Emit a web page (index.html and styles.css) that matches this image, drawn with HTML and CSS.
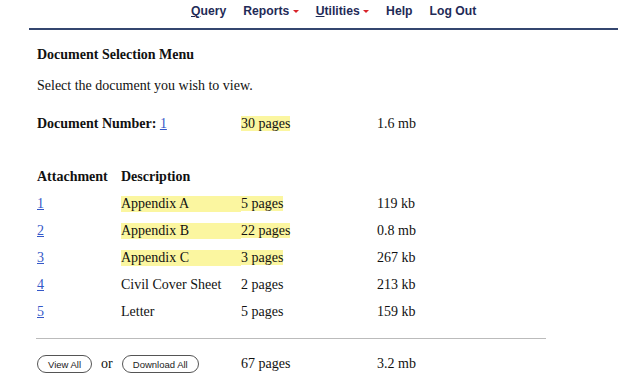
FILE: index.html
```html
<!DOCTYPE html>
<html lang="en">
<head>
    <meta charset="UTF-8">
    <meta name="viewport" content="width=device-width, initial-scale=1.0">
    <title>Document Selection Menu</title>
    <link rel="stylesheet" href="styles.css">
</head>
<body>
    <div class="topbar">
        <nav class="menu">
            <a href="#"><u>Q</u>uery</a>
            <a href="#">Reports <span class="caret"></span></a>
            <a href="#"><u>U</u>tilities <span class="caret"></span></a>
            <a href="#">Help</a>
            <a href="#">Log Out</a>
        </nav>
    </div>

    <div class="content">
        <h2>Document Selection Menu</h2>
        <p class="intro">Select the document you wish to view.</p>

        <div class="grid docnum">
            <div class="wide"><b>Document Number:</b> <a href="#">1</a></div>
            <div><span class="hl">30 pages</span></div>
            <div>1.6 mb</div>
        </div>

        <div class="grid head">
            <div>Attachment</div>
            <div>Description</div>
        </div>

        <div class="grid row">
            <div><a href="#">1</a></div>
            <div class="hl">Appendix A</div>
            <div><span class="hl">5 pages</span></div>
            <div>119 kb</div>
        </div>
        <div class="grid row">
            <div><a href="#">2</a></div>
            <div class="hl">Appendix B</div>
            <div><span class="hl">22 pages</span></div>
            <div>0.8 mb</div>
        </div>
        <div class="grid row">
            <div><a href="#">3</a></div>
            <div class="hl">Appendix C</div>
            <div><span class="hl">3 pages</span></div>
            <div>267 kb</div>
        </div>
        <div class="grid row">
            <div><a href="#">4</a></div>
            <div>Civil Cover Sheet</div>
            <div>2 pages</div>
            <div>213 kb</div>
        </div>
        <div class="grid row">
            <div><a href="#">5</a></div>
            <div>Letter</div>
            <div>5 pages</div>
            <div>159 kb</div>
        </div>

        <hr class="sep">

        <div class="grid totals">
            <div class="wide buttons">
                <button>View All</button>
                <span class="or">or</span>
                <button>Download All</button>
            </div>
            <div>67 pages</div>
            <div>3.2 mb</div>
        </div>
    </div>
</body>
</html>
```

FILE: styles.css
```css
body { margin: 0; font-family: "Liberation Serif", "Times New Roman", serif; font-size: 14px; color: #111; background-color: #fff; }
a { color: #3558c8; }

.topbar { margin: 0 22px 0 29px; border-bottom: 2px solid #34466f; height: 28px; }
.menu { display: flex; gap: 17px; padding: 4px 0 0 162px; font-family: "Liberation Sans", Arial, sans-serif; font-weight: bold; font-size: 12.2px; }
.menu a { color: #1f2b57; text-decoration: none; }
.caret { display: inline-block; width: 0; height: 0; border-left: 3px solid transparent; border-right: 3px solid transparent; border-top: 3px solid #d8232a; vertical-align: middle; }

.content { padding: 0 0 0 37px; }
h2 { font-size: 14px; margin: 0; padding-top: 16px; line-height: 17px; }
.intro { margin: 14px 0 0; line-height: 17px; }

.grid { display: grid; grid-template-columns: 84px 120px 136px auto; line-height: 16px; }
.grid .wide { grid-column: span 2; }
.hl { background-color: #fbf6a0; }

.docnum { margin-top: 22px; }
.head { margin-top: 37px; font-weight: bold; }
.row { margin-top: 11px; }

.sep { border: none; border-top: 1px solid #bbb; width: 510px; margin: 18px 0 0 -1px; }

.totals { margin-top: 16px; align-items: center; }
.buttons { display: flex; align-items: center; }
.buttons button { font-family: "Liberation Sans", Arial, sans-serif; font-size: 9.5px; color: #222; background: #fff; border: 1px solid #555; border-radius: 9px; height: 18px; padding: 0 10px; }
.or { margin: 0 9px; }
```
